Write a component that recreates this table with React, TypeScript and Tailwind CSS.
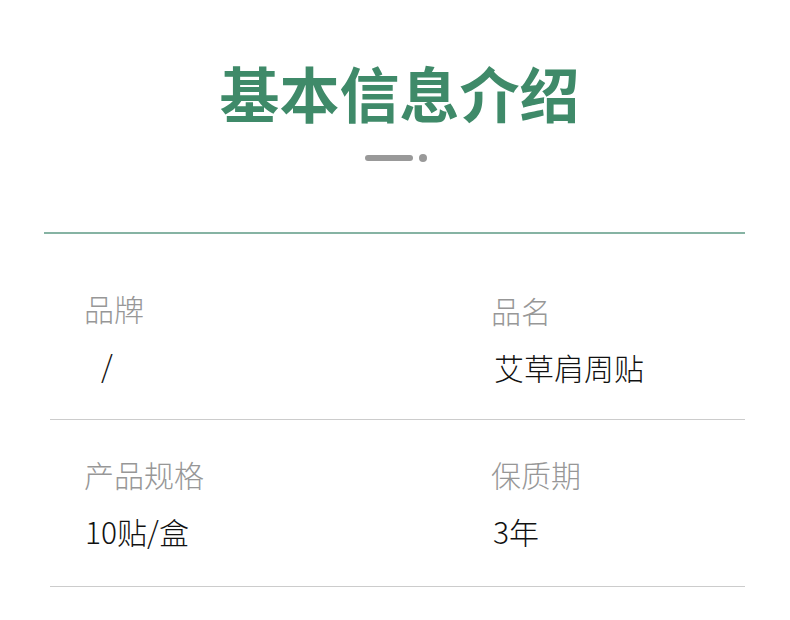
import React from "react";

const font = { fontFamily: '"Noto Sans CJK SC", "Noto Sans", sans-serif' };

function Cell({ label, value, valueClass = "" }: { label: string; value: string; valueClass?: string }) {
  return (
    <div className="flex flex-col">
      <div className="text-[30px] leading-[40px] font-light text-[#979797]">{label}</div>
      <div className={`mt-[17px] text-[30px] leading-[40px] font-light text-[#111] ${valueClass}`}>{value}</div>
    </div>
  );
}

export default function App() {
  return (
    <div className="w-[790px] h-[620px] bg-white overflow-hidden" style={font}>
      <div className="flex flex-col items-center pt-[54px]">
        <h1 className="pl-[9px] text-[60px] leading-[76px] font-bold text-[#3f8a69]">基本信息介绍</h1>
        <div className="mt-[24px] flex items-center gap-[6px] pl-[1px]">
          <div className="w-[48px] h-[6px] rounded-full bg-[#999999]" />
          <div className="w-[8px] h-[8px] rounded-full bg-[#999999]" />
        </div>
      </div>
      <div className="ml-[44px] mr-[45px] mt-[70px] h-[2px] bg-[#86b3a3]" />
      <div className="ml-[50px] mr-[45px]">
        <div className="flex pl-[34px] pt-[54px] pb-[32px] border-b border-[#cccccc]">
          <div className="w-[407px]">
            <Cell label="品牌" value="/" valueClass="pl-[17px]" />
          </div>
          <div className="pt-[2px]">
            <Cell label="品名" value="艾草肩周贴" valueClass="pl-[3px]" />
          </div>
        </div>
        <div className="flex pl-[34px] pt-[34px] pb-[35px] border-b border-[#cccccc]">
          <div className="w-[407px]">
            <Cell label="产品规格" value="10贴/盒" valueClass="pl-[1px]" />
          </div>
          <div>
            <Cell label="保质期" value="3年" valueClass="pl-[2px]" />
          </div>
        </div>
      </div>
    </div>
  );
}
